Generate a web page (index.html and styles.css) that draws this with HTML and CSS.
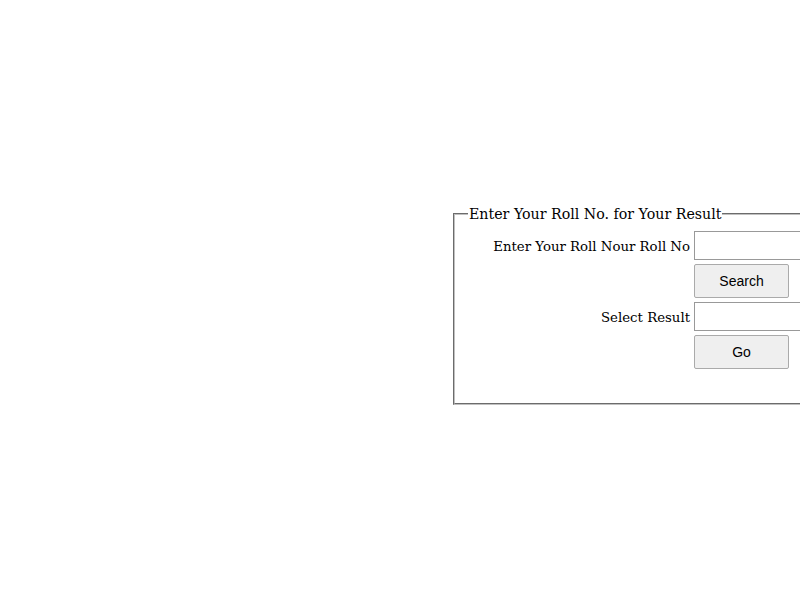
FILE: index.html
```html
<!DOCTYPE html>
<html>
<head>
<meta charset="utf-8">
<link rel="stylesheet" href="styles.css">
</head>
<body>
<div class="page">
  <fieldset class="box">
    <legend class="legend">Enter Your Roll No. for Your Result</legend>
    <div class="form">
      <label class="label">Enter Your Roll Nour Roll No</label>
      <input class="field" type="text">
      <span></span>
      <button class="btn">Search</button>
      <label class="label">Select Result</label>
      <input class="field" type="text">
      <span></span>
      <button class="btn">Go</button>
    </div>
  </fieldset>
</div>
</body>
</html>
```
FILE: styles.css
```css
html, body {
  margin: 0;
  padding: 0;
  background: #fff;
}
.page {
  padding: 206px 0 0 453px;
  width: 500px;
}
.box {
  margin: 0;
  width: 440px;
  border: 2px groove #c0c0c0;
  padding: 9px 12px 34px 0;
  font-family: "DejaVu Serif", serif;
  font-size: 13.3px;
  color: #000;
}
.legend {
  margin-left: 13px;
  padding: 0 1px;
  font-size: 14.2px;
}
.form {
  display: grid;
  grid-template-columns: 235px 200px;
  row-gap: 4px;
  column-gap: 4px;
  align-items: center;
}
.label {
  text-align: right;
  font-size: 13.3px;
  position: relative;
  top: 1px;
}
.field {
  box-sizing: border-box;
  height: 29px;
  width: 200px;
  border: 1px solid #999;
  border-right: none;
  margin: 0;
  padding: 0 4px;
}
.btn {
  box-sizing: border-box;
  width: 95px;
  height: 34px;
  margin: 0;
  background: #efefef;
  border: 1px solid #aaa;
  border-radius: 2px;
  font-family: "Liberation Sans", Arial, sans-serif;
  font-size: 14px;
  color: #000;
}
```
